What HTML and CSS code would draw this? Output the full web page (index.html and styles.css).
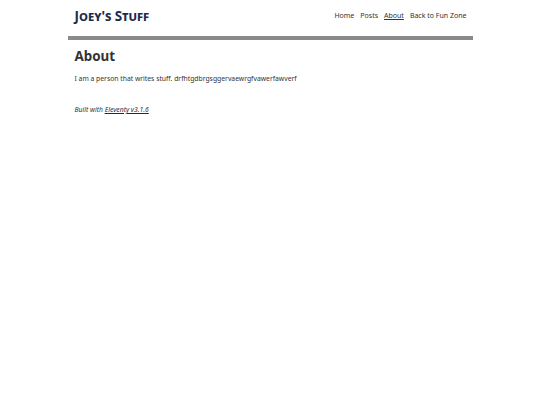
FILE: index.html
```html
<!DOCTYPE html>
<html lang="en">
<head>
<meta charset="utf-8">
<title>About</title>
<link rel="stylesheet" href="styles.css">
</head>
<body>
<div class="page">
  <header class="site-header">
    <a class="site-title" href="#">Joey's Stuff</a>
    <nav class="nav">
      <a href="#">Home</a>
      <a href="#">Posts</a>
      <a href="#" class="current">About</a>
      <a href="#">Back to Fun Zone</a>
    </nav>
  </header>
  <main class="content">
    <h1>About</h1>
    <p>I am a person that writes stuff. drfhtgdbrgsggervaewrgfvawerfawverf</p>
  </main>
  <footer class="site-footer">
    <p>Built with <a href="#">Eleventy v3.1.6</a></p>
  </footer>
</div>
</body>
</html>
```
FILE: styles.css
```css
html, body {
  margin: 0;
  padding: 0;
  background: #fff;
}
body {
  font-family: "Noto Sans", sans-serif;
  color: #333;
  font-size: 6.8px;
  line-height: 10px;
}
.page {
  width: 405px;
  margin: 0 auto;
}
.site-header {
  display: flex;
  justify-content: space-between;
  align-items: center;
  padding: 6px 6px 10px 7px;
  border-bottom: 4px solid #8a8a8a;
}
.site-title {
  font-variant: small-caps;
  font-weight: 700;
  font-size: 13.4px;
  line-height: 20px;
  color: #1b2b4b;
  text-decoration: none;
}
.nav {
  display: flex;
  gap: 6px;
  font-size: 7px;
}
.nav a {
  color: #333;
  text-decoration: none;
}
.nav a.current {
  text-decoration: underline;
}
.content {
  padding: 0 7px;
}
.content h1 {
  font-size: 13.4px;
  line-height: 16px;
  margin: 8px 0 10px;
}
.content p {
  margin: 0;
}
.site-footer {
  padding: 0 7px;
  margin-top: 21px;
  font-style: italic;
}
.site-footer p { margin: 0; }
.site-footer a { color: #1b2b4b; }
```
